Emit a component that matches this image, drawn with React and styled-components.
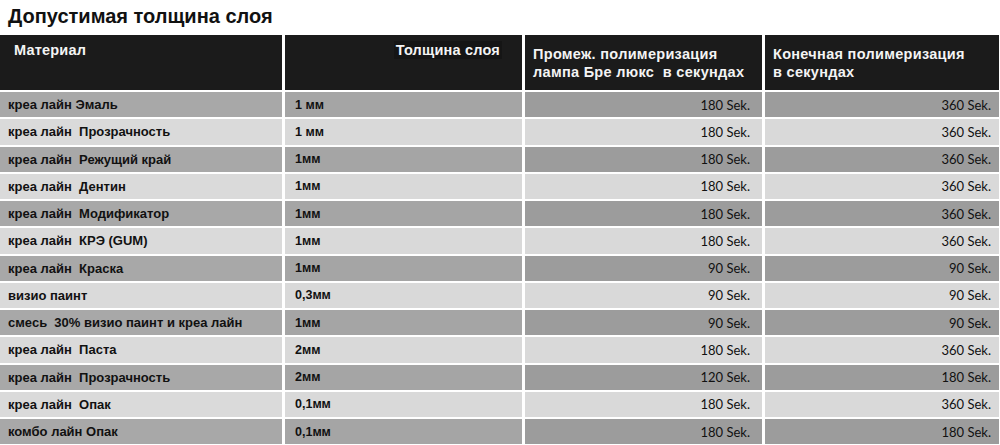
import styled, { createGlobalStyle } from 'styled-components'

const GlobalStyle = createGlobalStyle`
  html, body {
    margin: 0;
    padding: 0;
    background: #ffffff;
  }
  body {
    font-family: "Liberation Sans", Arial, sans-serif;
  }
`

const rows = [
  ['креа лайн Эмаль', '1 мм', '180 Sek.', '360 Sek.'],
  ['креа лайн  Прозрачность', '1 мм', '180 Sek.', '360 Sek.'],
  ['креа лайн  Режущий край', '1мм', '180 Sek.', '360 Sek.'],
  ['креа лайн  Дентин', '1мм', '180 Sek.', '360 Sek.'],
  ['креа лайн  Модификатор', '1мм', '180 Sek.', '360 Sek.'],
  ['креа лайн  КРЭ (GUM)', '1мм', '180 Sek.', '360 Sek.'],
  ['креа лайн  Краска', '1мм', '90 Sek.', '90 Sek.'],
  ['визио паинт', '0,3мм', '90 Sek.', '90 Sek.'],
  ['смесь  30% визио паинт и креа лайн', '1мм', '90 Sek.', '90 Sek.'],
  ['креа лайн  Паста', '2мм', '180 Sek.', '360 Sek.'],
  ['креа лайн  Прозрачность', '2мм', '120 Sek.', '180 Sek.'],
  ['креа лайн  Опак', '0,1мм', '180 Sek.', '360 Sek.'],
  ['комбо лайн Опак', '0,1мм', '180 Sek.', '180 Sek.'],
]

export default function App() {
  return (
    <>
      <GlobalStyle />
      <Page>
        <Title>Допустимая толщина слоя</Title>
        <Table>
          <HeadCell>Материал</HeadCell>
          <HeadCell $align="right">
            <span className="boxed">Толщина слоя</span>
          </HeadCell>
          <HeadCell $wide>
            Промеж. полимеризация
            <br />
            лампа Бре люкс&nbsp; в секундах
          </HeadCell>
          <HeadCell $wide>
            Конечная полимеризация
            <br />в секундах
          </HeadCell>

          {rows.map((r, i) => {
            const dark = i % 2 === 0
            return [
              <NameCell key={i + 'a'} $dark={dark}>{r[0]}</NameCell>,
              <ThickCell key={i + 'b'} $dark={dark}>{r[1]}</ThickCell>,
              <TimeCell key={i + 'c'} $dark={dark}>{r[2]}</TimeCell>,
              <TimeCell key={i + 'd'} $dark={dark} $last>{r[3]}</TimeCell>,
            ]
          })}
        </Table>
      </Page>
    </>
  )
}

const Page = styled.div`
  width: 1000px;
  height: 445px;
  overflow: hidden;
  background: #fff;
`

const Title = styled.h1`
  margin: 0;
  height: 35px;
  padding: 3px 0 0 8px;
  box-sizing: border-box;
  font-size: 20px;
  font-weight: bold;
  color: #111;
  line-height: 26px;
`

const Table = styled.div`
  display: grid;
  grid-template-columns: 282px 237px 237px 234px;
  grid-template-rows: 55px;
  grid-auto-rows: 25.25px;
  column-gap: 3px;
  row-gap: 2px;
`

const HeadCell = styled.div`
  background: #1b1b1b;
  color: #f4f4f4;
  font-weight: bold;
  font-size: 14.5px;
  line-height: 18px;
  letter-spacing: ${(p) => (p.$wide ? '0.3px' : '0.2px')};
  padding: ${(p) => (p.$wide ? '10px 8px 0 8px' : '6px 20px 0 14px')};
  text-align: ${(p) => p.$align || 'left'};

  .boxed {
    display: inline-block;
    background: #151515;
    padding: 0 2px;
  }
`

const BodyCell = styled.div`
  display: flex;
  align-items: center;
  color: #111;
  white-space: pre;
`

const NameCell = styled(BodyCell)`
  background: ${(p) => (p.$dark ? '#a8a8a8' : '#dadada')};
  padding-left: 8px;
  font-weight: bold;
  font-size: 13px;
`

const ThickCell = styled(BodyCell)`
  background: ${(p) => (p.$dark ? '#a5a5a5' : '#d9d9d9')};
  padding-left: 10px;
  font-weight: bold;
  font-size: 12.5px;
`

const TimeCell = styled(BodyCell)`
  background: ${(p) => (p.$dark ? '#9c9c9c' : '#d9d9d9')};
  justify-content: flex-end;
  padding-right: ${(p) => (p.$last ? '8px' : '12px')};
  font-family: Lato, "Open Sans", sans-serif;
  font-size: 13px;
`
